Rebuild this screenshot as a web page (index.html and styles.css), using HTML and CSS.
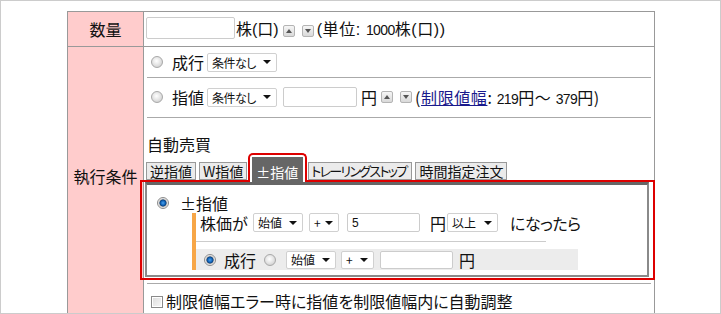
FILE: index.html
```html
<!DOCTYPE html>
<html lang="ja">
<head>
    <meta charset="UTF-8">
    <title>注文入力</title>
    <link rel="stylesheet" href="styles.css">
</head>
<body>

<div class="frame">
    <div class="order">
        <div class="label qtyLabel">数量</div>
        <div class="field qty">
            <input class="txt qtyInput" type="text">
            <span class="unit">株(口)</span>
            <span class="spin up"></span>
            <span class="spin down"></span>
            <span class="note">(単位: <span class="num">1000</span>株(口))</span>
        </div>

        <div class="label condLabel">執行条件</div>
        <div class="field cond">
            <div class="sub market">
                <span class="radio"></span>
                <span class="optName">成行</span>
                <span class="sel wide">条件なし</span>
            </div>
            <div class="sub limit">
                <span class="radio"></span>
                <span class="optName">指値</span>
                <span class="sel wide">条件なし</span>
                <input class="txt price" type="text">
                <span class="yen">円</span>
                <span class="spin up"></span>
                <span class="spin down"></span>
                <span class="range">(<a href="#">制限値幅</a>: <span class="num">219</span>円〜 <span class="num">379</span>円)</span>
            </div>

            <div class="auto">
                <div class="autoTitle">自動売買</div>
                <div class="tabs">
                    <span class="tab">逆指値</span>
                    <span class="tab beforeActive">W指値</span>
                    <span class="activeWrap"><span class="tab active">±指値</span></span>
                    <span class="tab narrow">トレーリングストップ</span>
                    <span class="tab">時間指定注文</span>
                </div>
                <div class="highlight">
                    <div class="panel">
                        <div class="pmHead">
                            <span class="radio on"></span>
                            <span class="pmName">±指値</span>
                        </div>
                        <div class="pmBody">
                            <div class="pmRow">
                                <span class="pmText">株価が</span>
                                <span class="sel base">始値</span>
                                <span class="sel sign">+</span>
                                <input class="txt pmPrice" type="text" value="5">
                                <span class="yen">円</span>
                                <span class="sel more">以上</span>
                                <span class="when">になったら</span>
                            </div>
                            <div class="sep"></div>
                            <div class="pmRow exec">
                                <span class="radio on"></span>
                                <span class="execName">成行</span>
                                <span class="radio"></span>
                                <span class="sel base">始値</span>
                                <span class="sel sign">+</span>
                                <input class="txt pmPrice2" type="text">
                                <span class="yen">円</span>
                            </div>
                        </div>
                    </div>
                </div>
            </div>

            <div class="sub check">
                <span class="box"></span>
                <span class="checkText">制限値幅エラー時に指値を制限値幅内に自動調整</span>
            </div>
        </div>
    </div>
</div>

</body>
</html>
```

FILE: styles.css
```css
/* Base */
body {
    margin: 0;
    font-family: "Liberation Sans", "Noto Sans CJK JP", sans-serif;
    color: #111;
    background: #fff;
}

.frame {
    width: 721px;
    height: 314px;
    box-sizing: border-box;
    border: 1px solid #ccc;
    overflow: hidden;
    padding: 10px 0 0 66px;
}

/* Order table */
.order {
    display: grid;
    grid-template-columns: 76px 510px;
    width: 588px;
    box-sizing: border-box;
    border: 1px solid #999;
    border-bottom: none;
}

.label {
    background: #ffcccc;
    border-right: 1px solid #999;
    text-align: center;
    font-size: 16px;
    font-family: "Noto Sans CJK JP", sans-serif;
}

.qtyLabel {
    height: 35px;
    line-height: 34px;
    border-bottom: 1px solid #999;
    box-sizing: border-box;
}

.condLabel {
    height: 300px;
    padding-top: 120px;
    line-height: 18px;
    box-sizing: border-box;
}

.field {
    font-size: 16px;
}

.qty {
    height: 35px;
    box-sizing: border-box;
    border-bottom: 1px solid #999;
    display: flex;
    align-items: center;
    padding: 0 0 2px 2px;
}

.cond {
    padding: 0 3px;
}

/* Form bits */
.txt {
    box-sizing: border-box;
    border: 1px solid #ccc;
    border-radius: 2px;
    background: #fff;
    margin: 0;
    padding: 0 4px;
    font-family: "Liberation Sans", sans-serif;
    font-size: 12px;
    color: #111;
}

.qtyInput {
    width: 89px;
    height: 22px;
    margin-right: 1px;
}

.num {
    font-family: "Liberation Sans", sans-serif;
    font-size: 14px;
    letter-spacing: -0.6px;
}

.unit {
    margin-right: 4px;
}

.note,
.range {
    letter-spacing: 0.6px;
}

.spin {
    width: 12px;
    height: 12px;
    box-sizing: border-box;
    border: 1px solid #b4b4b4;
    border-radius: 2px;
    background: linear-gradient(#f6f6f6, #d9d9d9);
    display: inline-flex;
    align-items: center;
    justify-content: center;
    margin-right: 7px;
}

.qty .spin {
    margin-top: 6px;
}

.spin::after {
    content: "";
    border-left: 3px solid transparent;
    border-right: 3px solid transparent;
}

.spin.up::after {
    border-bottom: 4px solid #555;
}

.spin.down::after {
    border-top: 4px solid #555;
}

.spin.down {
    margin-right: 3px;
}

.radio {
    width: 12px;
    height: 12px;
    box-sizing: border-box;
    border-radius: 50%;
    border: 1px solid #a8a8a8;
    background: radial-gradient(circle at 45% 40%, #fff 0, #e6e6e6 45%, #c4c4c4 100%);
    flex: none;
}

.radio.on {
    border-color: #8c8c8c;
    background: radial-gradient(circle, #4aa3f0 0, #1264b8 2.2px, #0b3f7a 3.2px, #b8b8b8 3.8px, #f2f2f2 4.8px);
}

.sel {
    height: 19px;
    box-sizing: border-box;
    border: 1px solid #d0d0d0;
    border-radius: 2px;
    background: #fff;
    display: inline-flex;
    align-items: center;
    justify-content: space-between;
    padding: 0 5px 0 4px;
    font-size: 12px;
    font-family: "Noto Sans CJK JP", sans-serif;
    font-feature-settings: "palt";
    flex: none;
}

.sel::after {
    content: "";
    border-left: 4px solid transparent;
    border-right: 4px solid transparent;
    border-top: 4px solid #111;
}

.sel.wide {
    width: 70px;
    letter-spacing: -0.5px;
}

/* Sub rows */
.sub {
    display: flex;
    align-items: center;
    border-bottom: 1px solid #aaa;
    font-family: "Noto Sans CJK JP", sans-serif;
}

.market {
    height: 31px;
    box-sizing: border-box;
    padding: 0 0 0 4px;
}

.limit {
    height: 40px;
    box-sizing: border-box;
    padding: 0 0 1px 4px;
}

.optName {
    margin: 0 3px 0 9px;
}

.price {
    width: 74px;
    height: 20px;
    margin-left: 6px;
}

.yen {
    margin: 0 4px 0 4px;
    font-family: "Noto Sans CJK JP", sans-serif;
}

.limit .yen {
    margin-right: 4px;
}

.range {
    font-size: 16px;
}

.range a {
    color: #1a1a8c;
}

/* Auto trade */
.auto {
    padding: 18px 0 3px;
    border-bottom: 1px solid #aaa;
    font-family: "Noto Sans CJK JP", sans-serif;
}

.autoTitle {
    line-height: 17px;
    height: 17px;
    font-size: 16px;
}

.tabs {
    display: flex;
    align-items: flex-end;
    margin-left: -1px;
}

.tab {
    height: 18px;
    box-sizing: border-box;
    border: 1px solid #999;
    background: #ebebeb;
    padding: 0 3px;
    font-size: 14px;
    line-height: 16px;
    margin: 0 3px 2px 0;
    font-feature-settings: "palt";
    white-space: nowrap;
}

.tab.beforeActive {
    margin-right: 1px;
}

.tab.narrow {
    font-size: 13px;
    letter-spacing: -1.7px;
    padding: 0 5px 0 2px;
}

.activeWrap {
    position: relative;
    z-index: 1;
    display: flex;
    border: 2px solid #dd0000;
    border-bottom: none;
    border-radius: 5px 5px 0 0;
    padding: 2px 2px 0 2px;
    background: #fff;
    margin-right: 1px;
}

.tab.active {
    height: 25px;
    margin: 0;
    border: none;
    background: #666;
    color: #fff;
    padding: 7px 4px 0;
    width: 51px;
}

.highlight {
    margin: -2px -4px 0 -7px;
    border: 2px solid #dd0000;
    padding: 0 4px 1px 3px;
}

.panel {
    height: 95px;
    box-sizing: border-box;
    border: 2px solid #8a8a8a;
    border-top: 3px solid #666;
    padding: 7px 0 0 10px;
}

.pmHead {
    height: 21px;
    display: flex;
    align-items: center;
}

.pmName {
    margin-left: 11px;
}

.pmBody {
    margin-left: 35px;
    border-left: 4px solid #f7a647;
    width: 386px;
}

.pmRow {
    display: flex;
    align-items: center;
    height: 19px;
    padding-left: 4px;
    white-space: nowrap;
}

.pmRow .sel.base {
    width: 50px;
    margin-left: 5px;
}

.pmRow .sel.sign {
    width: 30px;
    margin-left: 6px;
}

.pmPrice {
    width: 73px;
    height: 19px;
    margin-left: 8px;
}

.pmRow .yen {
    margin: 0 1px 0 10px;
}

.sel.more {
    width: 51px;
}

.when {
    margin-left: 12px;
    font-feature-settings: "palt";
    letter-spacing: -0.5px;
}

.sep {
    width: 350px;
    border-top: 1px solid #ccc;
    margin: 9px 0 7px;
}

.pmRow.exec {
    height: 21px;
    width: 382px;
    box-sizing: border-box;
    padding-left: 8px;
    background: #ececec;
}

.execName {
    margin: 0 8px 0 8px;
}

.exec .sel {
    height: 18px;
}

.exec .sel.base {
    margin-left: 10px;
}

.exec .sel.sign {
    width: 33px;
    margin-left: 5px;
}

.pmPrice2 {
    width: 73px;
    height: 18px;
    margin-left: 6px;
}

.exec .yen {
    margin-left: 6px;
}

/* Checkbox row */
.check {
    border-bottom: none;
    align-items: flex-start;
    padding: 7px 0 0 4px;
    height: 40px;
    box-sizing: border-box;
}

.box {
    width: 12px;
    height: 12px;
    box-sizing: border-box;
    border: 1px solid #8a8a8a;
    background: linear-gradient(135deg, #dcdcdc, #f8f8f8);
    box-shadow: inset 0 0 0 1px #fff;
    margin: 5px 3px 0 0;
    flex: none;
}

.checkText {
    line-height: 20px;
    font-feature-settings: "palt";
}
```
